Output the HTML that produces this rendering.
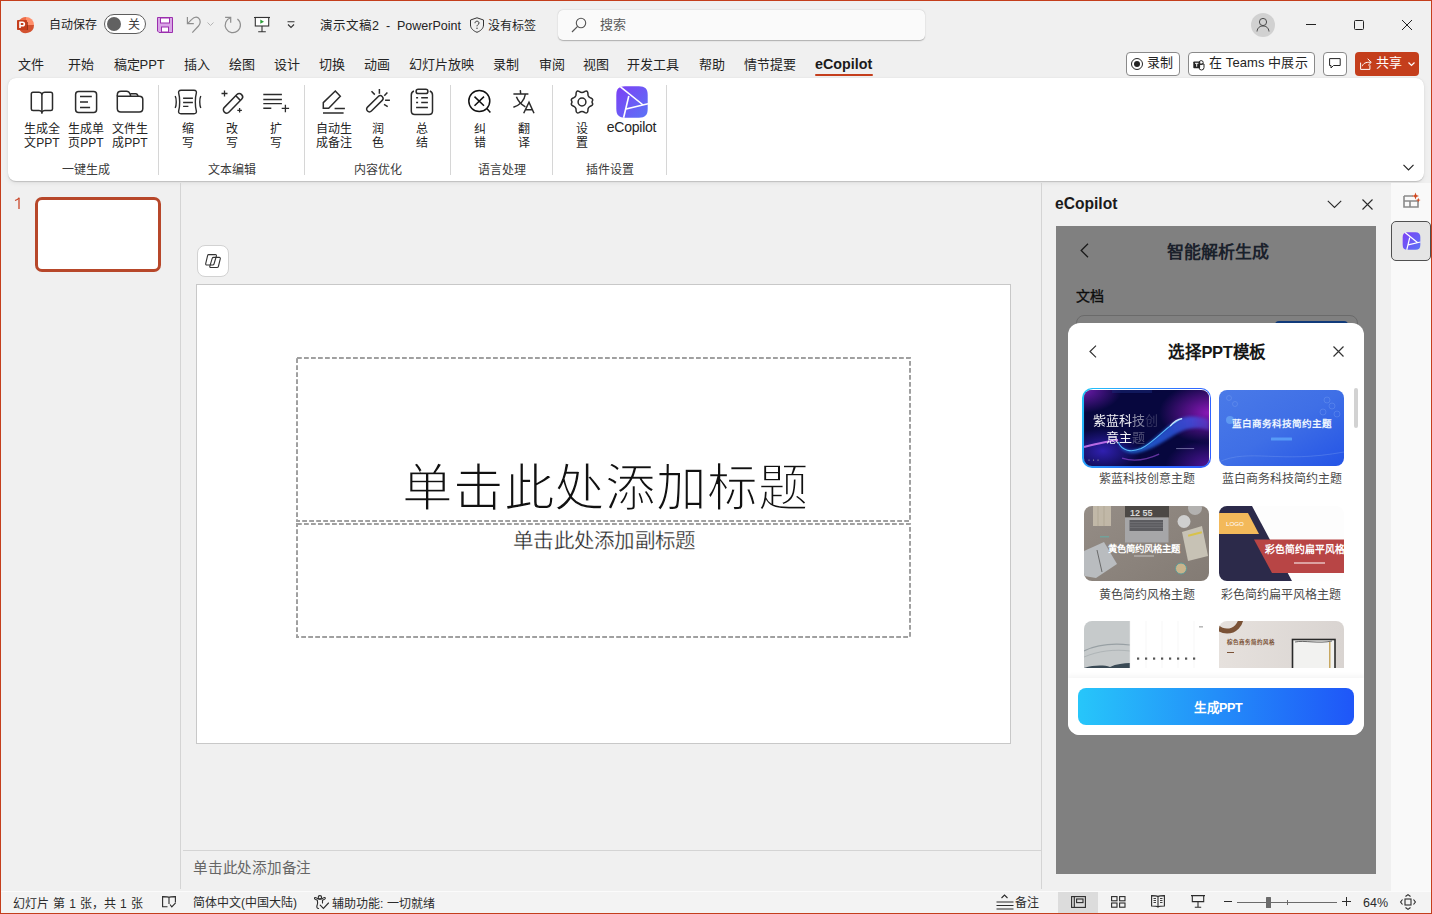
<!DOCTYPE html>
<html lang="zh-CN">
<head>
<meta charset="utf-8">
<style>
*{box-sizing:border-box;margin:0;padding:0}
html,body{width:1432px;height:914px;overflow:hidden;background:#f0f0f0;font-family:"Liberation Sans",sans-serif;color:#242424}
.a{position:absolute}
.t{position:absolute;white-space:nowrap;line-height:1}
svg{position:absolute;overflow:visible}
#frame{position:absolute;left:0;top:0;width:1432px;height:914px;border:1px solid #c43e1c;border-right-width:1px;pointer-events:none;z-index:50}
</style>
</head>
<body>
<div id="frame"></div>

<!-- ========== TITLE BAR ========== -->
<div id="titlebar">
<svg style="left:16px;top:16px" width="18" height="18" viewBox="0 0 18 18">
 <path d="M10 1 A8 8 0 0 1 18 9 L10 9 Z" fill="#ff8f6b"/>
 <path d="M10 1 A8 8 0 0 0 3 5 L10 9 Z" fill="#ed6c47"/>
 <path d="M18 9 A8 8 0 0 1 3 13 L10 9 Z" fill="#d35230"/>
 <rect x="4" y="6" width="8" height="8" fill="#6e2511" opacity=".6"/>
 <rect x="1" y="4" width="10" height="10" rx="0.8" fill="#c43e1c"/>
 <path d="M4 12 V6.2 H6.6 A1.75 1.75 0 0 1 6.6 9.7 H4.2" fill="none" stroke="#fff" stroke-width="1.6"/>
</svg>
<div class="t" style="left:49px;top:19px;font-size:12px;color:#242424">自动保存</div>
<div class="a" style="left:104px;top:14px;width:42px;height:20px;border:1px solid #5e5e5e;border-radius:10px;background:#fff"></div>
<div class="a" style="left:107px;top:17px;width:14px;height:14px;border-radius:50%;background:#616161"></div>
<div class="t" style="left:128px;top:19px;font-size:12px;color:#3a3a3a">关</div>
<!-- save -->
<svg style="left:157px;top:17px" width="16" height="16" viewBox="0 0 16 16">
 <path d="M0.5 0.5 H15.5 V15.5 H2 L0.5 14 Z" fill="#d9a5e6" stroke="#9b2fae" stroke-width="1"/>
 <rect x="3.5" y="1" width="9" height="5" fill="#fff" stroke="#9b2fae" stroke-width="1"/>
 <rect x="4.5" y="10" width="7" height="5" fill="#fff" stroke="#9b2fae" stroke-width="1"/>
</svg>
<!-- undo -->
<svg style="left:186px;top:16px" width="16" height="18" viewBox="0 0 16 18" fill="none" stroke="#8e8e8e" stroke-width="1.2">
 <path d="M1.4 0.9 V7.6 H7.8"/>
 <path d="M1.8 7.3 L5.5 3.6 C7.5 1.5 10.5 0.5 12.5 2 C15 4 14.5 8 12.5 10 L6.3 16.6"/>
</svg>
<svg style="left:207px;top:22px" width="7" height="4" viewBox="0 0 7 4"><path d="M0.5 0.5 L3.5 3.5 L6.5 0.5" fill="none" stroke="#b5b5b5" stroke-width="1"/></svg>
<!-- redo -->
<svg style="left:224px;top:16px" width="18" height="18" viewBox="0 0 18 18" fill="none" stroke="#8e8e8e" stroke-width="1.2">
 <path d="M1.1 1.4 H6.7 V6.7"/>
 <path d="M13.4 3 A7.6 7.6 0 1 1 6.6 1.8"/>
</svg>
<!-- present -->
<svg style="left:254px;top:17px" width="16" height="16" viewBox="0 0 16 16">
 <path d="M0 0.5 H16" stroke="#333" stroke-width="1.1"/>
 <rect x="1.3" y="0.5" width="13.4" height="8.5" fill="#fff" stroke="#333" stroke-width="1.1"/>
 <path d="M6.3 2.6 L10 4.7 L6.3 6.8 Z" fill="#2e9e3a"/>
 <path d="M8 9 V14.5 M4.2 14.8 H11.8" stroke="#333" stroke-width="1.1"/>
</svg>
<!-- customize -->
<svg style="left:287px;top:21px" width="8" height="8" viewBox="0 0 8 8"><path d="M0.5 0.8 H7.5 M1 3.5 L4 6.5 L7 3.5" fill="none" stroke="#333" stroke-width="1.1"/></svg>
<div class="t" style="left:320px;top:20px;font-size:12.5px;color:#242424">演示文稿2&nbsp; - &nbsp;PowerPoint</div>
<svg style="left:469px;top:17px" width="16" height="16" viewBox="0 0 16 16">
 <path d="M8 0.8 L14.5 3 V8 C14.5 11.5 11.5 14 8 15.3 C4.5 14 1.5 11.5 1.5 8 V3 Z" fill="none" stroke="#333" stroke-width="1"/>
 <path d="M6 6.2 C6 4.8 7 4.2 8 4.2 C9.1 4.2 10 4.9 10 6 C10 7.5 8 7.6 8 9.3" fill="none" stroke="#333" stroke-width="1"/>
 <circle cx="8" cy="11.3" r="0.7" fill="#333"/>
</svg>
<div class="t" style="left:488px;top:20px;font-size:12px;color:#242424">没有标签</div>
<!-- search -->
<div class="a" style="left:558px;top:10px;width:367px;height:30px;border-radius:5px;background:#fafafa;box-shadow:0 0.6px 1.2px rgba(0,0,0,.28)"></div>
<svg style="left:571px;top:17px" width="16" height="16" viewBox="0 0 16 16">
 <circle cx="10" cy="6" r="4.7" fill="none" stroke="#555" stroke-width="1.1"/>
 <path d="M6.6 9.4 L1 15" stroke="#555" stroke-width="1.2"/>
</svg>
<div class="t" style="left:600px;top:18px;font-size:13px;color:#5a5a5a">搜索</div>
<!-- avatar -->
<div class="a" style="left:1251px;top:13px;width:24px;height:24px;border-radius:50%;background:#d1d1d1"></div>
<svg style="left:1256px;top:17px" width="14" height="16" viewBox="0 0 14 16">
 <circle cx="7" cy="5" r="3.6" fill="none" stroke="#4a4a4a" stroke-width="1"/>
 <path d="M1 14.5 C1.5 10.5 4 9 7 9 C10 9 12.5 10.5 13 14.5" fill="none" stroke="#4a4a4a" stroke-width="1"/>
</svg>
<!-- window controls -->
<div class="a" style="left:1306px;top:24px;width:10px;height:1px;background:#222"></div>
<div class="a" style="left:1354px;top:20px;width:10px;height:10px;border:1px solid #222;border-radius:1.5px"></div>
<svg style="left:1402px;top:20px" width="10" height="10" viewBox="0 0 10 10"><path d="M0 0 L10 10 M10 0 L0 10" stroke="#222" stroke-width="1"/></svg>
</div>

<!-- ========== TABS ========== -->
<div id="tabs" style="font-size:13px;color:#242424">
<div class="t" style="left:18px;top:58px">文件</div>
<div class="t" style="left:67.5px;top:58px">开始</div>
<div class="t" style="left:113.5px;top:58px">稿定PPT</div>
<div class="t" style="left:184px;top:58px">插入</div>
<div class="t" style="left:228.5px;top:58px">绘图</div>
<div class="t" style="left:274px;top:58px">设计</div>
<div class="t" style="left:318.5px;top:58px">切换</div>
<div class="t" style="left:364px;top:58px">动画</div>
<div class="t" style="left:409px;top:58px">幻灯片放映</div>
<div class="t" style="left:492.5px;top:58px">录制</div>
<div class="t" style="left:538.5px;top:58px">审阅</div>
<div class="t" style="left:582.5px;top:58px">视图</div>
<div class="t" style="left:627px;top:58px">开发工具</div>
<div class="t" style="left:699px;top:58px">帮助</div>
<div class="t" style="left:743.5px;top:58px">情节提要</div>
<div class="t" style="left:815px;top:57px;font-size:14.3px;font-weight:bold;color:#1b1b1b">eCopilot</div>
<div class="a" style="left:815px;top:73.5px;width:58px;height:2.5px;border-radius:1px;background:#c43e1c"></div>
<!-- right buttons -->
<div class="a" style="left:1126px;top:52px;width:54px;height:24px;border:1px solid #8a8a8a;border-radius:4px;background:#fff"></div>
<div class="a" style="left:1131px;top:58px;width:12px;height:12px;border:1.1px solid #242424;border-radius:50%"></div>
<div class="a" style="left:1133.8px;top:60.8px;width:6.4px;height:6.4px;border-radius:50%;background:#242424"></div>
<div class="t" style="left:1146.5px;top:56px">录制</div>
<div class="a" style="left:1188px;top:52px;width:127px;height:24px;border:1px solid #8a8a8a;border-radius:4px;background:#fff"></div>
<svg style="left:1193px;top:58px" width="12" height="12" viewBox="0 0 12 12">
 <circle cx="8.2" cy="4.6" r="2" fill="none" stroke="#242424" stroke-width="1"/>
 <path d="M5 6 H11 V9.5 A2.5 2.5 0 0 1 6 9.5" fill="none" stroke="#242424" stroke-width="1"/>
 <rect x="0.3" y="3.5" width="6.8" height="6.8" rx="0.8" fill="#242424"/>
 <path d="M2 5.3 H5.4 M3.7 5.3 V8.7" stroke="#fff" stroke-width="1"/>
</svg>
<div class="t" style="left:1209px;top:56px;letter-spacing:0.1px">在 Teams 中展示</div>
<div class="a" style="left:1323px;top:52px;width:24px;height:24px;border:1px solid #8a8a8a;border-radius:4px;background:#fff"></div>
<svg style="left:1329px;top:58px" width="12" height="11" viewBox="0 0 12 11">
 <path d="M0.6 0.6 H11.2 V7.5 H4.5 L2 10 V7.5 H0.6 Z" fill="none" stroke="#242424" stroke-width="1"/>
</svg>
<div class="a" style="left:1355px;top:52px;width:64px;height:24px;border-radius:4px;background:#c43e1c"></div>
<svg style="left:1360px;top:58px" width="12" height="12" viewBox="0 0 12 12">
 <path d="M0.6 4.6 V11.4 H9.9 V7.2" fill="none" stroke="#fff" stroke-width="1"/>
 <path d="M2.3 8.2 C3 5.6 5.6 3.9 10.6 4.3 M7.7 0.7 L11.2 4.4 L8.2 7.3" fill="none" stroke="#fff" stroke-width="1"/>
</svg>
<div class="t" style="left:1375.5px;top:56px;color:#fff">共享</div>
<svg style="left:1408px;top:62px" width="7" height="4" viewBox="0 0 7 4"><path d="M0.5 0.5 L3.5 3.5 L6.5 0.5" fill="none" stroke="#fff" stroke-width="1.2"/></svg>
</div>

<!-- ========== RIBBON ========== -->
<div class="a" style="left:8px;top:78px;width:1416px;height:103px;background:#fff;border-radius:8px;box-shadow:0 0.5px 1px rgba(0,0,0,.16),0 2px 5px rgba(0,0,0,.07)"></div>
<div id="ribbon" style="font-size:12px;color:#242424">
<style>
#ribbon .l{position:absolute;width:100px;text-align:center;line-height:14.5px;white-space:nowrap}
#ribbon .g{position:absolute;width:100px;text-align:center;line-height:1;white-space:nowrap;color:#3a3a3a}
#ribbon .s{position:absolute;top:85px;width:1px;height:90px;background:#d6d6d6}
#ribbon svg *{vector-effect:non-scaling-stroke}
</style>
<!-- separators -->
<div class="s" style="left:158px"></div>
<div class="s" style="left:304px"></div>
<div class="s" style="left:450px"></div>
<div class="s" style="left:552px"></div>
<div class="s" style="left:666px"></div>
<!-- labels -->
<div class="l" style="left:-8px;top:121.5px">生成全<br>文PPT</div>
<div class="l" style="left:36px;top:121.5px">生成单<br>页PPT</div>
<div class="l" style="left:80px;top:121.5px">文件生<br>成PPT</div>
<div class="l" style="left:138px;top:121.5px">缩<br>写</div>
<div class="l" style="left:182px;top:121.5px">改<br>写</div>
<div class="l" style="left:226px;top:121.5px">扩<br>写</div>
<div class="l" style="left:284px;top:121.5px">自动生<br>成备注</div>
<div class="l" style="left:328px;top:121.5px">润<br>色</div>
<div class="l" style="left:372px;top:121.5px">总<br>结</div>
<div class="l" style="left:429.5px;top:121.5px">纠<br>错</div>
<div class="l" style="left:473.5px;top:121.5px">翻<br>译</div>
<div class="l" style="left:532px;top:121.5px">设<br>置</div>
<div class="l" style="left:581.5px;top:120px;font-size:14px;letter-spacing:-0.25px">eCopilot</div>
<div class="g" style="left:36px;top:163.5px">一键生成</div>
<div class="g" style="left:182px;top:163.5px">文本编辑</div>
<div class="g" style="left:328px;top:163.5px">内容优化</div>
<div class="g" style="left:452px;top:163.5px">语言处理</div>
<div class="g" style="left:560px;top:163.5px">插件设置</div>
<!-- icons -->
<svg style="left:30px;top:91px" width="24" height="24" viewBox="0 0 24 24" fill="none" stroke="#2b2b2b" stroke-width="1.5">
 <path d="M11.9 3 C11 1.6 10.5 1.3 9 1.3 H3 C1.8 1.3 1.3 1.8 1.3 3 V18 C1.3 19 1.8 19.5 3 19.5 H9 C10.5 19.5 11 19.9 11.9 21 C12.8 19.9 13.3 19.5 14.8 19.5 H20.8 C22 19.5 22.5 19 22.5 18 V3 C22.5 1.8 22 1.3 20.8 1.3 H14.8 C13.3 1.3 12.8 1.6 11.9 3 Z"/>
 <path d="M11.9 3 V22.7"/>
</svg>
<svg style="left:74px;top:90px" width="24" height="24" viewBox="0 0 24 24" fill="none" stroke="#2b2b2b" stroke-width="1.5">
 <rect x="1.6" y="1.6" width="21" height="21" rx="3"/>
 <path d="M6 6.5 H17.8 M6 11.9 H14 M6 17.4 H16.1"/>
</svg>
<svg style="left:116px;top:90px" width="28" height="24" viewBox="0 0 28 24" fill="none" stroke="#2b2b2b" stroke-width="1.5">
 <path d="M1.3 6.2 V18.5 C1.3 20.8 2.5 22 4.8 22 H23.3 C25.6 22 26.8 20.8 26.8 18.5 V9.5 C26.8 7.3 25.6 6.2 23.3 6.2 Z"/>
 <path d="M1.3 6.2 V5 C1.3 2.5 2.5 1.3 5 1.3 H10.5 C12.8 1.3 13.6 2.8 14.2 4.2 L14.6 6.2"/>
 <path d="M14.3 3.7 H19.8 C21 3.7 21.7 4.8 22 6.2"/>
</svg>
<svg style="left:174px;top:89px" width="28" height="26" viewBox="0 0 28 26" fill="none" stroke="#2b2b2b" stroke-width="1.4">
 <path d="M7 1.2 H20 C22 1.2 22.8 2.5 22.3 4.2 C21 8.5 21 17.5 22.3 21.8 C22.8 23.5 22 24.8 20 24.8 H7 C5 24.8 4.2 23.5 4.7 21.8 C6 17.5 6 8.5 4.7 4.2 C4.2 2.5 5 1.2 7 1.2 Z"/>
 <path d="M9.1 9.3 H18.9 M9.1 13.5 H18.9 M9.1 17.4 H14.4"/>
 <path d="M1.2 7 C2.6 9.7 2.6 16.3 1.2 19 M26.8 7 C25.4 9.7 25.4 16.3 26.8 19"/>
</svg>
<svg style="left:220px;top:89px" width="24" height="26" viewBox="0 0 24 26" fill="none" stroke="#2b2b2b" stroke-width="1.5">
 <path d="M4.4 23.1 C3 21.7 3 19.8 4.4 18.4 L16.9 5.6 C18.3 4.2 20.2 4.2 21.6 5.6 C23 7 23 8.9 21.6 10.3 L9.1 23.1 C7.7 24.5 5.8 24.5 4.4 23.1 Z"/>
 <path d="M15.8 6.8 L20.4 11.4"/>
 <path d="M4.5 1.5 V7.5 M1.5 4.5 H7.5" stroke-width="1.3"/>
 <path d="M19.6 19 V23.6 M17.3 21.3 H21.9" stroke-width="1.3"/>
</svg>
<svg style="left:262px;top:92px" width="28" height="22" viewBox="0 0 28 22" fill="none" stroke="#2b2b2b" stroke-width="1.4">
 <path d="M1.3 2.5 H19.9 M1.3 7.5 H19.9 M1.3 11.6 H19.9 M1.3 16.2 H9.3" />
 <path d="M23.4 12.8 V20.2 M19.7 16.4 H27.1" stroke-width="1.3"/>
</svg>
<svg style="left:322px;top:89px" width="24" height="26" viewBox="0 0 24 26" fill="none" stroke="#2b2b2b" stroke-width="1.5">
 <path d="M1.3 13.6 L13.3 2 L18.3 7.3 L6.7 19.2 H1.3 Z"/>
 <path d="M12.6 19.5 H22.9 M1 23.9 H21.6"/>
</svg>
<svg style="left:365px;top:88px" width="26" height="26" viewBox="0 0 26 26" fill="none" stroke="#2b2b2b" stroke-width="1.5">
 <path d="M2.5 23 C1.3 21.8 1.3 20.3 2.5 19.1 L13.3 8.5 C14.5 7.3 16 7.3 17.2 8.5 C18.4 9.7 18.4 11.2 17.2 12.4 L6.4 23 C5.2 24.2 3.7 24.2 2.5 23 Z"/>
 <path d="M14.4 1 V5.8 M6.5 3.3 L9.8 6.6 M22.4 4.4 L19.3 7.7 M20.1 12.2 H24.9 M19 16.4 L22.7 18.6"/>
</svg>
<svg style="left:410px;top:88px" width="24" height="28" viewBox="0 0 24 28" fill="none" stroke="#2b2b2b" stroke-width="1.5">
 <path d="M4 3 C2.3 3.6 1.3 4.8 1.3 7 V23 C1.3 25.3 2.5 26.5 4.8 26.5 H19 C21.3 26.5 22.5 25.3 22.5 23 V7 C22.5 4.8 21.5 3.6 19.8 3"/>
 <rect x="6.1" y="1.3" width="11.8" height="4.2" rx="2.1"/>
 <path d="M6.1 9.7 H8.1 M11.2 9.7 H17.9 M6.1 14.6 H8.1 M11.2 14.6 H17.9 M6.1 19.5 H17.9"/>
</svg>
<svg style="left:467px;top:89px" width="26" height="26" viewBox="0 0 26 26" fill="none" stroke="#111" stroke-width="1.5">
 <circle cx="12.3" cy="12" r="10.5"/>
 <path d="M7.5 7.6 L17 16.8 M17 7.6 L7.5 16.8"/>
 <path d="M19.8 19.6 L23.4 23.5"/>
</svg>
<svg style="left:512px;top:89px" width="24" height="26" viewBox="0 0 24 26" fill="none" stroke="#2b2b2b" stroke-width="1.5">
 <path d="M1.4 5 H16.4 M8.3 1.1 L8.7 5"/>
 <path d="M13.4 5 C12.5 11 8 16 1.4 18.2"/>
 <path d="M4.4 7.8 C6 12 9.5 15.8 13.4 17.9"/>
 <path d="M11.7 24.3 L17 13.2 L22 24.3 M13.5 20.7 H20.3"/>
</svg>
<svg style="left:569px;top:88.8px" width="26" height="26" viewBox="0 0 26 26" fill="none" stroke="#2b2b2b" stroke-width="1.5">
 <path d="M10.3 3.3 C11.2 3.9 11.9 4.3 13 4.3 C14.1 4.3 14.8 3.9 15.7 3.3 C16.6 2.8 17.6 3 18.1 3.9 C18.6 4.8 18.3 5.9 18.5 6.8 C18.8 7.8 19.4 8.5 20.3 9 C21.2 9.5 22.5 9.6 22.7 10.8 C22.9 11.8 22.1 12.4 22.1 13 C22.1 13.6 22.9 14.2 22.7 15.2 C22.5 16.4 21.2 16.5 20.3 17 C19.4 17.5 18.8 18.2 18.5 19.2 C18.3 20.1 18.6 21.2 18.1 22.1 C17.6 23 16.6 23.2 15.7 22.7 C14.8 22.1 14.1 21.7 13 21.7 C11.9 21.7 11.2 22.1 10.3 22.7 C9.4 23.2 8.4 23 7.9 22.1 C7.4 21.2 7.7 20.1 7.5 19.2 C7.2 18.2 6.6 17.5 5.7 17 C4.8 16.5 3.5 16.4 3.3 15.2 C3.1 14.2 3.9 13.6 3.9 13 C3.9 12.4 3.1 11.8 3.3 10.8 C3.5 9.6 4.8 9.5 5.7 9 C6.6 8.5 7.2 7.8 7.5 6.8 C7.7 5.9 7.4 4.8 7.9 3.9 C8.4 3 9.4 2.8 10.3 3.3 Z" transform="translate(13 13) scale(1.1) translate(-13 -13)"/>
 <circle cx="13" cy="13" r="3.9"/>
</svg>
<svg style="left:616px;top:86px" width="32" height="32" viewBox="0 0 32 32">
 <defs><linearGradient id="ecg" x1="0" y1="0" x2="1" y2="1"><stop offset="0" stop-color="#7d3ff5"/><stop offset="1" stop-color="#5b74f6"/></linearGradient></defs>
 <path d="M9 0.3 H23 C29 0.3 31.7 3 31.7 9 V23 C31.7 29 29 31.7 23 31.7 H9 C3 31.7 0.3 29 0.3 23 V9 C0.3 3 3 0.3 9 0.3 Z" fill="url(#ecg)"/>
 <path d="M4.5 0.8 L26.5 18.5 M12.8 10 L7.6 31.8 M10 23 L32 17.8" stroke="#fff" stroke-width="1.6" fill="none"/>
</svg>
<svg style="left:1403px;top:164px" width="11" height="7" viewBox="0 0 11 7"><path d="M0.5 0.8 L5.5 5.8 L10.5 0.8" fill="none" stroke="#242424" stroke-width="1.2"/></svg>
</div>

<!-- ========== LEFT THUMB PANE ========== -->
<div class="a" style="left:180px;top:183px;width:1px;height:706px;background:#d4d4d4"></div>
<svg style="left:14px;top:197px" width="8" height="13" viewBox="0 0 8 13"><path d="M5 0.8 V12" stroke="#c9472a" stroke-width="1.3" fill="none"/><path d="M5.2 0.8 C4 2.2 2.7 3 1 3.6" stroke="#c9472a" stroke-width="1.1" fill="none"/></svg>
<div class="a" style="left:35px;top:197px;width:126px;height:75px;border:3px solid #b7472a;border-radius:7px;background:#fff"></div>

<!-- ========== EDIT AREA ========== -->
<div class="a" style="left:197px;top:245px;width:32px;height:32px;border:1px solid #d2d2d2;border-radius:8px;background:#fff"></div>
<svg style="left:205px;top:254px" width="16" height="14" viewBox="0 0 16 14" fill="none" stroke="#333" stroke-width="1.1" stroke-linejoin="round">
 <path d="M3.5 0.6 H10.4 C11.3 0.6 11.6 1.2 11.4 2 L9 10 C8.8 10.7 8.3 11 7.6 11 H1.8 C1 11 0.5 10.5 0.7 9.7 L2.6 1.6 C2.8 0.9 3 0.6 3.5 0.6 Z"/>
 <path d="M8.6 3.4 H14.3 C15 3.4 15.5 3.9 15.3 4.7 L13.4 12.5 C13.2 13.2 12.7 13.5 12 13.5 H5.8 C5 13.5 4.6 13 4.8 12.3 L7.2 4.4 C7.4 3.7 7.9 3.4 8.6 3.4 Z"/>
</svg>
<div class="a" style="left:196px;top:284px;width:815px;height:460px;background:#fff;border:1px solid #c8c8c8"></div>
<svg style="left:296px;top:357px" width="615" height="281" viewBox="0 0 615 281" fill="none" stroke="#a0a0a0" stroke-width="2" stroke-dasharray="4.8 2.2">
 <rect x="1" y="1" width="613" height="163"/>
 <rect x="1" y="167" width="613" height="113"/>
</svg>
<div class="t" style="left:402px;top:464px;font-size:50.6px;letter-spacing:-0.2px;-webkit-text-stroke:1.5px #fff;color:#111">单击此处添加标题</div>
<div class="t" style="left:513px;top:530.5px;font-size:20.5px;letter-spacing:0.25px;-webkit-text-stroke:0.3px #fff;color:#222">单击此处添加副标题</div>
<div class="a" style="left:183px;top:850px;width:858px;height:1px;background:#d4d4d4"></div>
<div class="t" style="left:193px;top:860.5px;font-size:14.6px;letter-spacing:-0.25px;color:#666">单击此处添加备注</div>
<div class="a" style="left:1041px;top:183px;width:1px;height:706px;background:#d4d4d4"></div>

<!-- ========== TASK PANE ========== -->
<div class="a" style="left:1391px;top:183px;width:40px;height:708px;background:#f9f9f9"></div>
<div id="taskpane">
<div class="t" style="left:1055px;top:195.5px;font-size:15.6px;font-weight:bold;color:#1b1b1b">eCopilot</div>
<div class="a" style="left:1056px;top:226px;width:320px;height:648px;background:#808080"></div>
<svg style="left:1327px;top:200px" width="15" height="9" viewBox="0 0 15 9"><path d="M0.8 0.8 L7.5 7.5 L14.2 0.8" fill="none" stroke="#2a2a2a" stroke-width="1.1"/></svg>
<svg style="left:1361.5px;top:198.5px" width="11" height="11" viewBox="0 0 11 11"><path d="M0.5 0.5 L10.5 10.5 M10.5 0.5 L0.5 10.5" fill="none" stroke="#2a2a2a" stroke-width="1.1"/></svg>
<!-- side strip -->
<svg style="left:1403px;top:192px" width="18" height="16" viewBox="0 0 18 16">
 <path d="M1 4 H10 M1 4 V15 H15 V9 M1 9 H15 M7 9 V15" fill="none" stroke="#8a8a8a" stroke-width="1.6"/>
 <path d="M12.5 0.5 L13.4 3.1 L16 4 L13.4 4.9 L12.5 7.5 L11.6 4.9 L9 4 L11.6 3.1 Z" fill="#d04a22"/>
 <path d="M15.3 5.8 L15.9 7.5 L17.6 8.1 L15.9 8.7 L15.3 10.4 L14.7 8.7 L13 8.1 L14.7 7.5 Z" fill="#d04a22"/>
</svg>
<div class="a" style="left:1391px;top:221px;width:40px;height:40px;border:1px solid #505050;border-radius:5px;background:#e5e5e5"></div>
<svg style="left:1402px;top:232px" width="19" height="18" viewBox="0 0 32 32">
 <defs><linearGradient id="ecg2" x1="0" y1="0" x2="1" y2="1"><stop offset="0" stop-color="#7d3ff5"/><stop offset="1" stop-color="#5b74f6"/></linearGradient></defs>
 <path d="M9 0.3 H23 C29 0.3 31.7 3 31.7 9 V23 C31.7 29 29 31.7 23 31.7 H9 C3 31.7 0.3 29 0.3 23 V9 C0.3 3 3 0.3 9 0.3 Z" fill="url(#ecg2)"/>
 <path d="M4.5 0.8 L26.5 18.5 M12.8 10 L7.6 31.8 M10 23 L32 17.8" stroke="#fff" stroke-width="2.2" fill="none"/>
</svg>
<!-- dimmed underlying page -->
<svg style="left:1080px;top:243px" width="9" height="15" viewBox="0 0 9 15"><path d="M8 0.8 L1.2 7.5 L8 14.2" fill="none" stroke="#1a1a1a" stroke-width="1.3"/></svg>
<div class="t" style="left:1167px;top:244px;font-size:17px;font-weight:bold;color:#1a212b;letter-spacing:-0.1px">智能解析生成</div>
<div class="t" style="left:1076px;top:289px;font-size:14px;color:#0d0d0d;-webkit-text-stroke:0.35px #0d0d0d">文档</div>
<div class="a" style="left:1076px;top:315px;width:282px;height:40px;border:1px solid #6a6a6a;border-radius:8px"></div>
<div class="a" style="left:1275px;top:321px;width:73px;height:10px;border-radius:4px;background:#103a7a"></div>
<!-- modal -->
<div id="modal" class="a" style="left:1068px;top:323px;width:296px;height:412px;background:#fff;border-radius:12px;overflow:hidden">
<svg style="left:21px;top:21.5px" width="8" height="13" viewBox="0 0 8 13"><path d="M7 0.6 L1 6.5 L7 12.4" fill="none" stroke="#333" stroke-width="1.2"/></svg>
<div class="t" style="left:100px;top:21px;font-size:16.5px;font-weight:bold;color:#161616;letter-spacing:-0.3px">选择PPT模板</div>
<svg style="left:264.5px;top:22.8px" width="11" height="11" viewBox="0 0 11 11"><path d="M0.5 0.5 L10.5 10.5 M10.5 0.5 L0.5 10.5" fill="none" stroke="#333" stroke-width="1.2"/></svg>
<!-- scrollbar -->
<div class="a" style="left:286px;top:65px;width:4px;height:40px;border-radius:2px;background:#d2d2d2"></div>
<!-- card1 selected border -->
<div class="a" style="left:14.2px;top:64.8px;width:128.8px;height:79.8px;border-radius:10px;background:linear-gradient(120deg,#22c8f8,#2f6aff 60%,#2f5cff)"></div>
<div class="a" style="left:15.5px;top:66.1px;width:126.2px;height:77.2px;border-radius:9px;background:#fff"></div>
<svg style="left:16px;top:66.6px" width="125.2" height="76.1" viewBox="0 0 125 76">
 <defs>
  <clipPath id="c1"><rect x="0" y="0" width="125" height="76" rx="8"/></clipPath>
  <radialGradient id="p1" cx="0" cy="0" r="0.3"><stop offset="0" stop-color="#6a1aa8"/><stop offset="1" stop-color="#6a1aa8" stop-opacity="0"/></radialGradient>
  <radialGradient id="p2" cx="1" cy="0.3" r="0.4"><stop offset="0" stop-color="#8a18b8"/><stop offset="1" stop-color="#8a18b8" stop-opacity="0"/></radialGradient>
  <radialGradient id="p3" cx="1" cy="1" r="0.35"><stop offset="0" stop-color="#50149a"/><stop offset="1" stop-color="#50149a" stop-opacity="0"/></radialGradient>
  <radialGradient id="p4" cx="0.15" cy="0.8" r="0.3"><stop offset="0" stop-color="#3020b0"/><stop offset="1" stop-color="#3020b0" stop-opacity="0"/></radialGradient>
  <linearGradient id="w1" x1="0" y1="0" x2="1" y2="0"><stop offset="0" stop-color="#1e8cff"/><stop offset="0.5" stop-color="#2f6bff"/><stop offset="0.8" stop-color="#3c5cf0"/><stop offset="1" stop-color="#5a3cc8"/></linearGradient>
  <filter id="bl1" x="-20%" y="-50%" width="140%" height="200%"><feGaussianBlur stdDeviation="1.4"/></filter>
  <filter id="bl2" x="-20%" y="-100%" width="140%" height="300%"><feGaussianBlur stdDeviation="0.6"/></filter>
 </defs>
 <g clip-path="url(#c1)">
  <rect width="125" height="76" fill="#07073e"/>
  <rect width="125" height="76" fill="url(#p4)"/>
  <rect width="125" height="76" fill="url(#p1)"/>
  <rect width="125" height="76" fill="url(#p2)"/>
  <rect width="125" height="76" fill="url(#p3)"/>
  <rect x="28" y="0" width="40" height="3" fill="#1a2a7a" opacity="0.5"/>
  <path d="M0 57 C12 54 24 51 34 50" stroke="#d27af5" stroke-width="2" fill="none" filter="url(#bl2)" opacity="0.85"/>
  <path d="M34 52 C37 60 46 62 56 58 C72 50 84 33 98 28 C108 25 117 27 125 30 L125 40 C112 36 102 38 92 44 C76 54 60 64 47 63 C40 62 36 59 34 52 Z" fill="url(#w1)" opacity="0.7" filter="url(#bl1)"/>
  <path d="M34 52 C38 61 47 62.5 57 58.5 C72 51 84 34 98 28.5" fill="none" stroke="#5cc0ff" stroke-width="1.1" opacity="0.95" filter="url(#bl2)"/>
  <path d="M86 36 C90 31 94 29 98 28.5" fill="none" stroke="#e0f2ff" stroke-width="1.2" opacity="0.9" filter="url(#bl2)"/>
  <path d="M38 68 C50 72 62 70 75 64" stroke="#a050e0" stroke-width="1.4" fill="none" opacity="0.6" filter="url(#bl2)"/>
  <text x="9.3" y="35.3" font-size="13" fill="#fff" style="font-family:'Liberation Sans',sans-serif" opacity="0.95">紫蓝科<tspan opacity="0.55">技</tspan><tspan opacity="0.2">创</tspan></text>
  <text x="21.7" y="51.5" font-size="13" fill="#fff" style="font-family:'Liberation Sans',sans-serif" opacity="0.95">意主<tspan opacity="0.3">题</tspan></text>
  <rect x="92" y="58" width="18" height="1" fill="#c8c8f0" opacity="0.5"/>
  <circle cx="5" cy="70" r="0.6" fill="#aaa"/><circle cx="9.5" cy="70" r="0.6" fill="#aaa"/><circle cx="14" cy="70" r="0.6" fill="#aaa"/>
 </g>
</svg>
<!-- card2 -->
<svg style="left:151px;top:67px" width="125" height="76" viewBox="0 0 125 76">
 <defs>
  <clipPath id="c2"><rect width="125" height="76" rx="8"/></clipPath>
  <linearGradient id="b2" x1="0" y1="0" x2="1" y2="1"><stop offset="0" stop-color="#4a7ae8"/><stop offset="0.5" stop-color="#3f6fe6"/><stop offset="1" stop-color="#2454e6"/></linearGradient>
 </defs>
 <g clip-path="url(#c2)">
  <rect width="125" height="76" fill="url(#b2)"/>
  <circle cx="11" cy="30" r="4" fill="#70b0f8" opacity="0.6"/>
  <g fill="none" stroke="#8ab0f5" stroke-width="0.5" opacity="0.6">
   <circle cx="108" cy="10" r="3"/><circle cx="113" cy="16" r="3"/><circle cx="104" cy="22" r="3"/><circle cx="118" cy="24" r="3"/><circle cx="10" cy="8" r="2.5"/><circle cx="16" cy="14" r="2.5"/>
  </g>
  <path d="M0 72 C30 58 60 74 125 62" fill="none" stroke="#7aa0f0" stroke-width="0.6" opacity="0.6"/>
  <text x="62.5" y="37.3" text-anchor="middle" font-size="9.6" font-weight="bold" fill="#eef6ff" style="font-family:'Liberation Sans',sans-serif">蓝白商务科技简约主题</text>
  <rect x="52" y="47.5" width="21" height="3" rx="0.5" fill="#5aa0f8" opacity="0.9"/>
 </g>
</svg>
<div class="t" style="left:30.5px;top:150px;font-size:12px;color:#4a4a4a">紫蓝科技创意主题</div>
<div class="t" style="left:154px;top:150px;font-size:12px;color:#4a4a4a">蓝白商务科技简约主题</div>
<!-- card3 -->
<svg style="left:16px;top:183px" width="125" height="75" viewBox="0 0 125 75">
 <defs>
  <clipPath id="c3"><rect width="125" height="75" rx="8"/></clipPath>
  <linearGradient id="b3" x1="0" y1="0" x2="1" y2="1"><stop offset="0" stop-color="#958d86"/><stop offset="1" stop-color="#837b74"/></linearGradient>
 </defs>
 <g clip-path="url(#c3)">
  <rect width="125" height="75" fill="url(#b3)"/>
  <rect x="41" y="0" width="44" height="11.5" fill="#4c4845"/>
  <text x="46" y="9.5" font-size="9" font-weight="bold" fill="#d8d8d8" style="font-family:'Liberation Sans',sans-serif">12 55</text>
  <rect x="41" y="11.5" width="43.5" height="25" fill="#a6a6a8"/>
  <rect x="45.5" y="14" width="33.5" height="11" fill="#5c5c60"/>
  <g stroke="#8a8a8e" stroke-width="0.4"><path d="M45.5 16.5 H79 M45.5 19 H79 M45.5 21.5 H79"/></g>
  <rect x="9" y="-1" width="18" height="21" fill="#c9c0ae" opacity="0.85"/>
  <path d="M14 0 V20 M20 0 V20" stroke="#a89f8c" stroke-width="0.6"/>
  <circle cx="100" cy="15.5" r="6.5" fill="#cfcfcf"/>
  <circle cx="111" cy="2" r="7" fill="#bdbdbd" opacity="0.8"/>
  <path d="M98 26 L118 20 L124 50 L104 55 Z" fill="#c7c2b5"/>
  <rect x="104" y="27" width="14" height="2" fill="#d8c24a" transform="rotate(-14 111 28)"/>
  <path d="M0 45 L20 36 L33 58 L12 72 L0 70 Z" fill="#b9bcbf"/>
  <path d="M13 44 L18 66" stroke="#555" stroke-width="0.8"/>
  <rect x="16" y="30" width="9" height="1.5" fill="#6aa8a0" opacity="0.8"/>
  <circle cx="97" cy="62.5" r="5.5" fill="#c9b48c"/>
  <circle cx="97" cy="62.5" r="5.5" fill="none" stroke="#5a9a98" stroke-width="1"/>
  <text x="60.2" y="45.5" text-anchor="middle" font-size="9.3" font-weight="bold" fill="#fff" style="font-family:'Liberation Sans',sans-serif">黄色简约风格主题</text><rect x="50" y="49.5" width="20" height="1" fill="#ddd" opacity="0.7"/>
 </g>
</svg>
<!-- card4 -->
<svg style="left:151px;top:183px" width="125" height="75" viewBox="0 0 125 75">
 <defs><clipPath id="c4"><rect width="125" height="75" rx="8"/></clipPath></defs>
 <g clip-path="url(#c4)">
  <rect width="125" height="75" fill="#fdfdfd"/>
  <path d="M0 0 H33 L73 75 H0 Z" fill="#2c2a4a"/>
  <path d="M0 7 H29 L40 28 H0 Z" fill="#f3b95a"/>
  <text x="7" y="20.2" font-size="6.2" fill="#fff" style="font-family:'Liberation Sans',sans-serif">LOGO</text>
  <path d="M35 33.5 H125 V67 H53 Z" fill="#b84545"/>
  <text x="46" y="47.2" font-size="9.8" font-weight="bold" fill="#fff" style="font-family:'Liberation Sans',sans-serif">彩色简约扁平风格</text>
  <rect x="75" y="56" width="31" height="2" fill="#e8c0c0" opacity="0.75"/>
 </g>
</svg>
<div class="t" style="left:30.5px;top:265.5px;font-size:12px;color:#4a4a4a">黄色简约风格主题</div>
<div class="t" style="left:152.5px;top:265.5px;font-size:12px;color:#4a4a4a">彩色简约扁平风格主题</div>
<!-- row3 -->
<svg style="left:16px;top:298px" width="125" height="47" viewBox="0 0 125 47">
 <defs><clipPath id="c5"><path d="M8 0 H117 A8 8 0 0 1 125 8 V47 H0 V8 A8 8 0 0 1 8 0 Z"/></clipPath></defs>
 <g clip-path="url(#c5)">
  <rect width="125" height="47" fill="#fff"/>
  <rect width="46" height="47" fill="#c6cacb"/>
  <path d="M0 30 C12 24 28 22 46 24" stroke="#98a0a4" stroke-width="1.2" fill="none"/>
  <path d="M0 36 C14 30 30 28 46 30" stroke="#a8aeb1" stroke-width="0.8" fill="none"/>
  <path d="M0 47 C10 44 20 44 26 46 C32 43 40 42 46 42 V47 Z" fill="#3a4a55"/>
  <path d="M46 0 V47 M62 0 V47 M78 0 V47 M94 0 V47 M110 0 V47" stroke="#eeeeee" stroke-width="0.5"/>
  <g fill="#555"><rect x="53" y="36.5" width="2.2" height="2.2"/><rect x="61" y="36.5" width="2.2" height="2.2"/><rect x="69" y="36.5" width="2.2" height="2.2"/><rect x="77" y="36.5" width="2.2" height="2.2"/><rect x="85" y="36.5" width="2.2" height="2.2"/><rect x="93" y="36.5" width="2.2" height="2.2"/><rect x="101" y="36.5" width="2.2" height="2.2"/><rect x="109" y="36.5" width="2.2" height="2.2"/></g>
  <rect x="115" y="5.5" width="4" height="0.8" fill="#777"/>
 </g>
</svg>
<svg style="left:151px;top:298px" width="125" height="47" viewBox="0 0 125 47">
 <defs><clipPath id="c6"><path d="M8 0 H117 A8 8 0 0 1 125 8 V47 H0 V8 A8 8 0 0 1 8 0 Z"/></clipPath>
 <linearGradient id="b6" x1="0" y1="0" x2="1" y2="0"><stop offset="0" stop-color="#e6e1dd"/><stop offset="1" stop-color="#d9d4d1"/></linearGradient></defs>
 <g clip-path="url(#c6)">
  <rect width="125" height="47" fill="url(#b6)"/>
  <circle cx="8" cy="-4" r="14" fill="none" stroke="#7a5236" stroke-width="5"/>
  <text x="8" y="23" font-size="5.5" font-weight="bold" fill="#7a5236" style="font-family:'Liberation Sans',sans-serif">棕色商务简约风格</text>
  <rect x="8" y="31" width="7" height="1" fill="#7a5236"/>
  <rect x="73.5" y="18.5" width="42.5" height="40" fill="#f2f2f0" stroke="#2a2a2a" stroke-width="1.6"/><rect x="110" y="21" width="1.5" height="30" fill="#c8a860"/><path d="M76 21 C85 19 100 23 113 20" stroke="#444" stroke-width="0.8" fill="none"/>
 </g>
</svg>
<!-- footer -->
<div class="a" style="left:0;top:355px;width:296px;height:57px;background:#fff;box-shadow:0 -3px 4px rgba(0,0,0,.035)"></div>
<div class="a" style="left:10px;top:365px;width:276px;height:37px;border-radius:8px;background:linear-gradient(90deg,#27c6fa,#1f56f8)"></div>
<div class="t" style="left:126px;top:379px;font-size:12.6px;font-weight:bold;color:#fff;letter-spacing:-0.45px">生成PPT</div>
</div>
</div>

<!-- ========== STATUS BAR ========== -->
<div class="a" style="left:0;top:891px;width:1432px;height:1px;background:#fbfbfb"></div>
<div class="a" style="left:0;top:892px;width:1432px;height:22px;background:#f3f3f3"></div>
<div id="status" style="font-size:12px;color:#2b2b2b">
<div class="t" style="left:13px;top:897.5px;word-spacing:0.75px">幻灯片 第 1 张，共 1 张</div>
<svg style="left:162px;top:896px" width="14" height="12" viewBox="0 0 14 12" fill="none" stroke="#2b2b2b" stroke-width="1.1">
 <path d="M7 1.3 C6 0.6 4.5 0.6 0.6 0.6 V10.8 H5.5 M7 1.3 C8 0.6 9.5 0.6 13.4 0.6 V6.5 M7 1.3 V8"/>
 <path d="M8 8.5 L9.8 10.9 L13.6 6.8"/>
</svg>
<div class="t" style="left:193px;top:897px">简体中文(中国大陆)</div>
<svg style="left:313px;top:895px" width="17" height="15" viewBox="0 0 17 15" fill="none" stroke="#2b2b2b" stroke-width="1.1" stroke-linecap="round">
 <circle cx="6.9" cy="2.3" r="1.7"/>
 <path d="M1.6 3.6 C1.2 2.3 2.4 2.2 3.4 2.9 C4.6 3.8 5.4 4.3 6.9 4.3 C8.4 4.3 9.2 3.8 10.4 2.9 C11.4 2.2 12.6 2.3 12.2 3.6 C11.9 4.5 10.8 4.6 9.5 5.2 V8"/>
 <path d="M1.6 3.6 C2 4.5 3.3 4.6 4.3 5.2 C4.8 6.5 4.7 8.5 4 10.8 C3.4 12.5 4.2 13.5 5.6 13.5"/>
 <path d="M7.2 10.2 L10.4 13.4 L15.5 8"/>
</svg>
<div class="t" style="left:331.5px;top:897.5px;letter-spacing:0.1px">辅助功能: 一切就绪</div>
<svg style="left:996px;top:894px" width="18" height="16" viewBox="0 0 18 16" fill="none" stroke="#2b2b2b" stroke-width="1.1">
 <path d="M5.5 4 L8.5 1 L11.5 4"/>
 <path d="M0.5 8 H17.5 M0.5 11.5 H17.5 M0.5 15 H17.5"/>
</svg>
<div class="t" style="left:1015px;top:896.5px">备注</div>
<div class="a" style="left:1058px;top:892px;width:40px;height:21px;background:#dcdcdc"></div>
<svg style="left:1071px;top:896px" width="15" height="12" viewBox="0 0 15 12" fill="none" stroke="#2b2b2b" stroke-width="1.1">
 <rect x="0.6" y="0.6" width="13.8" height="10.8"/>
 <path d="M3.3 0.6 V11.4"/>
 <rect x="5.6" y="3" width="6.4" height="3.6"/>
</svg>
<svg style="left:1111px;top:896px" width="15" height="12" viewBox="0 0 15 12" fill="none" stroke="#2b2b2b" stroke-width="1.1">
 <rect x="0.6" y="0.6" width="5.4" height="4.2"/><rect x="8.6" y="0.6" width="5.4" height="4.2"/>
 <rect x="0.6" y="7" width="5.4" height="4.2"/><rect x="8.6" y="7" width="5.4" height="4.2"/>
</svg>
<svg style="left:1151px;top:895px" width="14" height="13" viewBox="0 0 14 13" fill="none" stroke="#2b2b2b" stroke-width="1.1">
 <path d="M7 1.5 C5.5 0.6 3 0.6 0.6 0.6 V11 C3 11 5.5 11 7 12 C8.5 11 11 11 13.4 11 V0.6 C11 0.6 8.5 0.6 7 1.5 Z M7 1.5 V12"/>
 <path d="M2.5 3.5 H5 M2.5 5.5 H5 M2.5 7.5 H5 M9 3.5 H11.5 M9 5.5 H11.5 M9 7.5 H11.5" stroke-width="0.9"/>
</svg>
<svg style="left:1191px;top:895px" width="14" height="13" viewBox="0 0 14 13" fill="none" stroke="#2b2b2b" stroke-width="1.1">
 <path d="M0 0.6 H14 M1.3 0.6 V6.6 H12.7 V0.6 M7 6.6 V12.2 M3.8 12.3 H10.2"/>
</svg>
<div class="a" style="left:1224px;top:901px;width:8px;height:1.2px;background:#2b2b2b"></div>
<div class="a" style="left:1237px;top:902px;width:100px;height:1px;background:#6b6b6b"></div>
<div class="a" style="left:1287px;top:900px;width:1px;height:5px;background:#6b6b6b"></div>
<div class="a" style="left:1266px;top:897px;width:5px;height:11px;background:#6b6b6b;border-radius:0.5px"></div>
<div class="a" style="left:1342px;top:901px;width:8.5px;height:1.1px;background:#2b2b2b"></div>
<div class="a" style="left:1345.7px;top:897.3px;width:1.1px;height:8.5px;background:#2b2b2b"></div>
<div class="t" style="left:1363px;top:896.5px;font-size:12.5px">64%</div>
<svg style="left:1400px;top:894px" width="16" height="16" viewBox="0 0 16 16" fill="none" stroke="#2b2b2b" stroke-width="1.1">
 <rect x="5" y="5" width="6" height="6"/>
 <path d="M5.5 2.5 L8 0.6 L10.5 2.5 M5.5 13.5 L8 15.4 L10.5 13.5 M2.5 5.5 L0.6 8 L2.5 10.5 M13.5 5.5 L15.4 8 L13.5 10.5"/>
</svg>
</div>

</body>
</html>
